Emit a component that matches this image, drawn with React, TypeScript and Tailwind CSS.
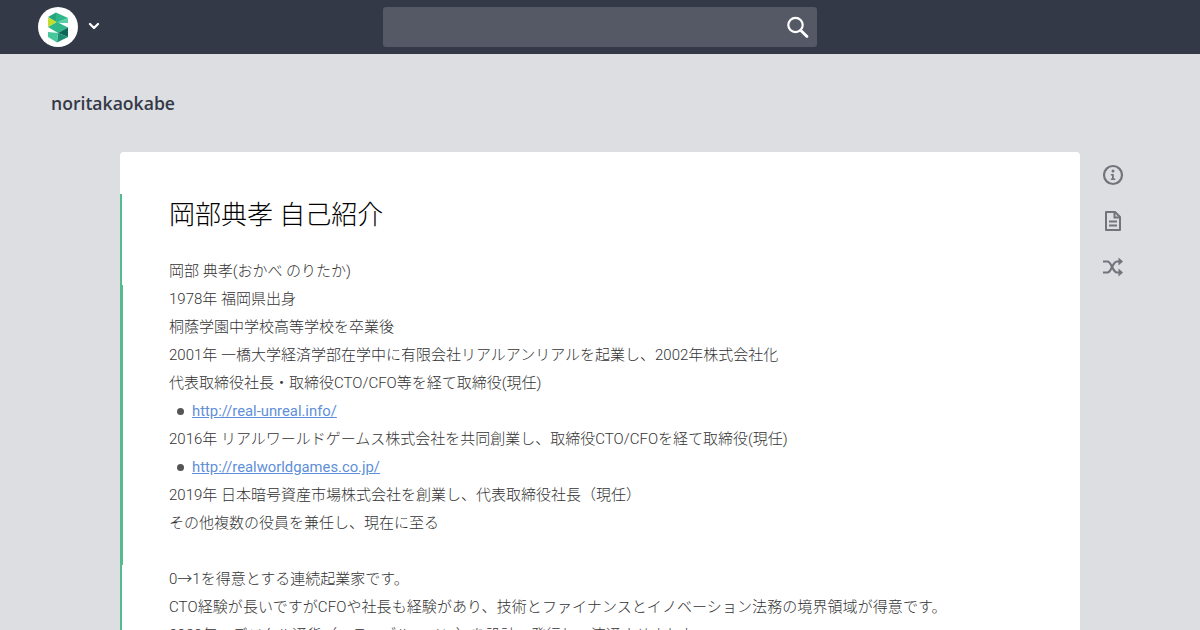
import React from 'react';
import { ChevronDown } from 'lucide-react';

const Logo = () => (
  <svg width="40" height="40" viewBox="0 0 40 40" className="rounded-full bg-white">
    <polygon points="18,5.5 30,11 18,16" fill="#2fb78a" />
    <polygon points="18,5.5 10,10 18,15" fill="#25a580" />
    <polygon points="30,11 30,16 18,16" fill="#58d0a8" />
    <polygon points="10,10.5 19,15 10,20" fill="#c5dc2c" />
    <polygon points="10,20 19,15 30,20.5 20,26" fill="#2fb78a" />
    <polygon points="30,20.5 30,30 20,26" fill="#0d6656" />
    <polygon points="20,26 30,30 19,35.5" fill="#1c8f70" />
    <polygon points="10,25 20,26 19,35.5 10,30" fill="#46c79c" />
  </svg>
);

const SearchIcon = () => (
  <svg width="24" height="24" viewBox="0 0 24 24" fill="none" stroke="white">
    <circle cx="10.5" cy="10" r="7.2" strokeWidth="2.2" />
    <path d="M15.6 15.2 L22 21.6" strokeWidth="2.8" strokeLinecap="round" />
  </svg>
);

const InfoIcon = () => (
  <svg width="22" height="22" viewBox="0 0 22 22" fill="none">
    <circle cx="11" cy="11" r="9" stroke="currentColor" strokeWidth="2.2" />
    <circle cx="11" cy="7" r="1.5" fill="currentColor" />
    <path d="M8.8 10 H11.8 V14.6 H13.2 V16 H8.8 V14.6 H10 V11.4 H8.8 Z" fill="currentColor" />
  </svg>
);

const DocIcon = () => (
  <svg width="22" height="22" viewBox="0 0 22 22" fill="none" stroke="currentColor" strokeWidth="2">
    <path d="M4 2 H13 L18 7 V20 H4 Z" strokeLinejoin="round" />
    <path d="M12.5 2.5 V7.5 H17.5" />
    <path d="M7 11.5 H15 M7 15.5 H15" />
  </svg>
);

const ShuffleIcon = () => (
  <svg width="22" height="22" viewBox="0 0 22 22" fill="none" stroke="currentColor" strokeWidth="2.2">
    <path d="M1 5.5 H5.5 C9.5 5.5 10.5 16.5 15 16.5 H17.5" />
    <path d="M1 16.5 H5.5 C9.5 16.5 10.5 5.5 15 5.5 H17.5" />
    <path d="M16.5 1.5 L21 5.5 L16.5 9.5 Z" fill="currentColor" stroke="none" />
    <path d="M16.5 12.5 L21 16.5 L16.5 20.5 Z" fill="currentColor" stroke="none" />
  </svg>
);

const Line = ({ children }: { children?: React.ReactNode }) => (
  <p className="h-7 whitespace-nowrap leading-7">{children}</p>
);

const LinkItem = ({ href }: { href: string }) => (
  <div className="flex h-7 items-center leading-7">
    <span className="mx-[8px] h-[7px] w-[7px] rounded-full bg-[#555]" />
    <a className="text-[14.8px] font-normal text-[#5e8fd8] underline">{href}</a>
  </div>
);

export default function App() {
  return (
    <div
      className="h-[630px] w-[1200px] overflow-hidden bg-[#dcdee2]"
      style={{ fontFamily: 'Roboto, "Noto Sans CJK JP", sans-serif' }}
    >
      {/* ヘッダー */}
      <header className="relative flex h-[54px] items-center bg-[#343948] pl-[38px]">
        <Logo />
        <ChevronDown size={16} strokeWidth={3.5} className="ml-2 -mt-0.5 text-white" />
        <div className="absolute left-[383px] top-[7px] flex h-10 w-[434px] items-center justify-end rounded-[3px] bg-[#555965] pr-[8px]">
          <SearchIcon />
        </div>
      </header>

      <h2 className="ml-[51px] mt-[36px] h-[27px] text-[17.6px] font-semibold leading-[27px] text-[#343948]" style={{ fontFamily: '"Open Sans", sans-serif' }}>
        noritakaokabe
      </h2>

      <div className="mt-[35px] flex">
        {/* 本文カード */}
        <main className="ml-[120px] w-[960px] rounded-t-[4px] bg-white pt-[42px] text-[15px] font-light text-[#333]">
          <div className="border-l-2 border-[#55bb8e] pl-[47px]">
            <h1 className="mb-[8px] h-[55px] pt-[3px] text-[26px] font-light leading-[36px] text-black">岡部典孝 自己紹介</h1>
            <Line>岡部 典孝(おかべ のりたか)</Line>
          </div>
          <div className="border-l-[3px] border-[#55bb8e] pl-[46px]">
            <Line>1978年 福岡県出身</Line>
            <Line>桐蔭学園中学校高等学校を卒業後</Line>
            <Line>2001年 一橋大学経済学部在学中に有限会社リアルアンリアルを起業し、2002年株式会社化</Line>
            <Line>代表取締役社長・取締役CTO/CFO等を経て取締役(現任)</Line>
            <LinkItem href="http://real-unreal.info/" />
            <Line>2016年 リアルワールドゲームス株式会社を共同創業し、取締役CTO/CFOを経て取締役(現任)</Line>
            <LinkItem href="http://realworldgames.co.jp/" />
            <Line>2019年 日本暗号資産市場株式会社を創業し、代表取締役社長（現任）</Line>
            <Line>その他複数の役員を兼任し、現在に至る</Line>
            <Line />
          </div>
          <div className="border-l-2 border-[#55bb8e] pl-[47px]">
            <Line>0→1を得意とする連続起業家です。</Line>
            <p className="h-7 whitespace-nowrap leading-7 tracking-[0.08px]">CTO経験が長いですがCFOや社長も経験があり、技術とファイナンスとイノベーション法務の境界領域が得意です。</p>
            <Line>2020年、デジタル通貨（ステーブルコイン）を設計・発行し、流通させました</Line>
          </div>
        </main>

        {/* サイドアイコン */}
        <aside className="ml-[22px] flex flex-col gap-6 pt-[12px] text-[#72747c]">
          <InfoIcon />
          <DocIcon />
          <ShuffleIcon />
        </aside>
      </div>
    </div>
  );
}
